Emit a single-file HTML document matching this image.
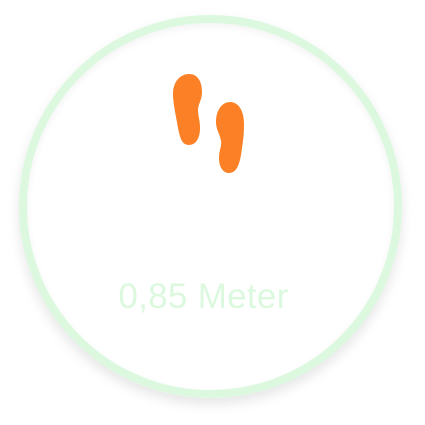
<!DOCTYPE html>
<html><head><style>
html,body{margin:0;width:425px;height:425px;background:#fff;overflow:hidden}
.c{position:absolute;left:19px;top:15px;width:367px;height:367px;border:8px solid #dcf9e0;border-radius:50%;box-shadow:0 6px 12px rgba(0,0,0,0.10), inset 0 3px 8px rgba(0,0,0,0.05)}
.t{position:absolute;left:0;width:407px;top:277px;text-align:center;font-family:"Liberation Sans",sans-serif;font-size:35px;line-height:40px;color:#dcf9e0;letter-spacing:0.3px}
</style></head><body>
<div class="c"></div>
<svg style="position:absolute;left:0;top:0" width="425" height="425">
<path fill="#fc8025" d="M189 74 C198 74 202 82 202 92 C202 100 198 104 198 110 C198 116 200 120 200 128 C200 138 196 145 189 145 C182 145 180 138 178 128 C176 116 173 104 173 94 C173 82 180 74 189 74 Z"/>
<path fill="#fc8025" d="M230 102 C223 102 216 109 216 122 C216 130 220 134 221 141 C222 146 219 150 219 158 C219 167 223 173 229 173 C236 173 239 166 241 155 C243 142 244 135 244 124 C244 110 238 102 230 102 Z"/>
</svg>
<div class="t">0,85 Meter</div>
</body></html>
